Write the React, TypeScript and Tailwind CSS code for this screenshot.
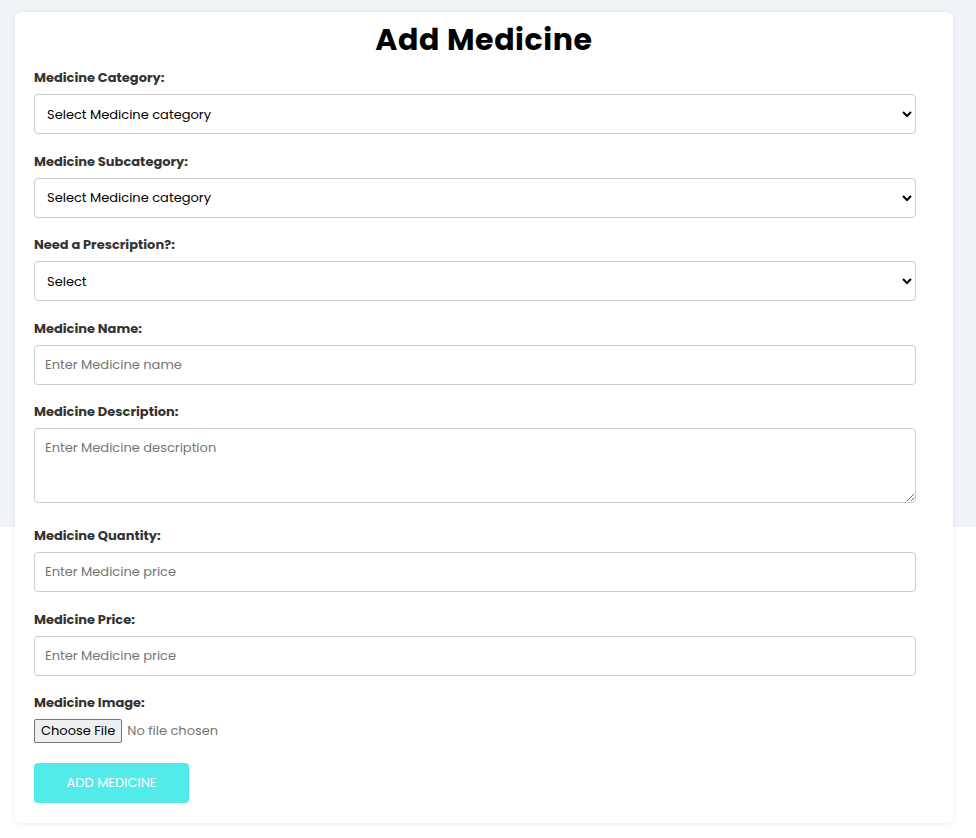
const FONT = "font-['Poppins','Open_Sans',sans-serif]";

function Field({ label, children, gap = "mb-[17.5px]" }: { label: string; children: React.ReactNode; gap?: string }) {
  return (
    <div className={gap}>
      <label className="mb-[6px] block text-[13px] font-bold leading-[20px] text-[#333]">{label}</label>
      {children}
    </div>
  );
}

const boxCls =
  "block h-[40px] w-[882px] rounded-[4px] border border-[#ccc] bg-white px-[10px] text-[13px] text-black placeholder:text-[#757575] outline-none";
const selectCls =
  "block h-[40px] w-[882px] rounded-[4px] border border-[#ccc] bg-white pl-[8px] pr-[6px] text-[13px] text-black outline-none";

export default function App() {
  return (
    <div className={`min-h-[838px] bg-[linear-gradient(to_bottom,#f0f3f8_527px,#fff_527px)] pt-[12px] ${FONT}`}>
      <div className="ml-[15px] w-[938px] rounded-[6px] bg-white px-[19px] pb-[20px] pt-[10px] shadow-[0_1px_6px_rgba(0,0,0,0.08)]">
        <h1 className="mb-[10px] text-center text-[30px] font-bold leading-[36px] tracking-[0.6px] text-black">Add Medicine</h1>
        <form onSubmit={(e) => e.preventDefault()}>
          <Field label="Medicine Category:">
            <select className={selectCls}>
              <option>Select Medicine category</option>
            </select>
          </Field>
          <Field label="Medicine Subcategory:">
            <select className={selectCls}>
              <option>Select Medicine category</option>
            </select>
          </Field>
          <Field label="Need a Prescription?:">
            <select className={selectCls}>
              <option>Select</option>
            </select>
          </Field>
          <Field label="Medicine Name:">
            <input className={boxCls} placeholder="Enter Medicine name" />
          </Field>
          <Field label="Medicine Description:" gap="mb-[23px]">
            <textarea
              className="block h-[75px] w-[882px] rounded-[4px] border border-[#ccc] bg-white px-[10px] pb-[8px] pt-[9px] text-[13px] text-black placeholder:text-[#757575] outline-none"
              placeholder="Enter Medicine description"
            />
          </Field>
          <Field label="Medicine Quantity:">
            <input className={boxCls} placeholder="Enter Medicine price" />
          </Field>
          <Field label="Medicine Price:">
            <input className={boxCls} placeholder="Enter Medicine price" />
          </Field>
          <div className="mb-[20.5px]">
            <label className="mb-[6px] block text-[13px] font-bold leading-[20px] text-[#333]">Medicine Image:</label>
            <input
              type="file"
              className="block text-[13px] text-[#757575] file:mr-[5px] file:rounded-[2px] file:border file:border-solid file:border-[#767676] file:bg-[#efefef] file:px-[6px] file:py-[1px] file:text-black"
            />
          </div>
          <button
            type="submit"
            className="h-[40px] w-[155px] rounded-[4px] bg-[#53eaea] text-[13px] text-white"
          >
            ADD MEDICINE
          </button>
        </form>
      </div>
    </div>
  );
}
